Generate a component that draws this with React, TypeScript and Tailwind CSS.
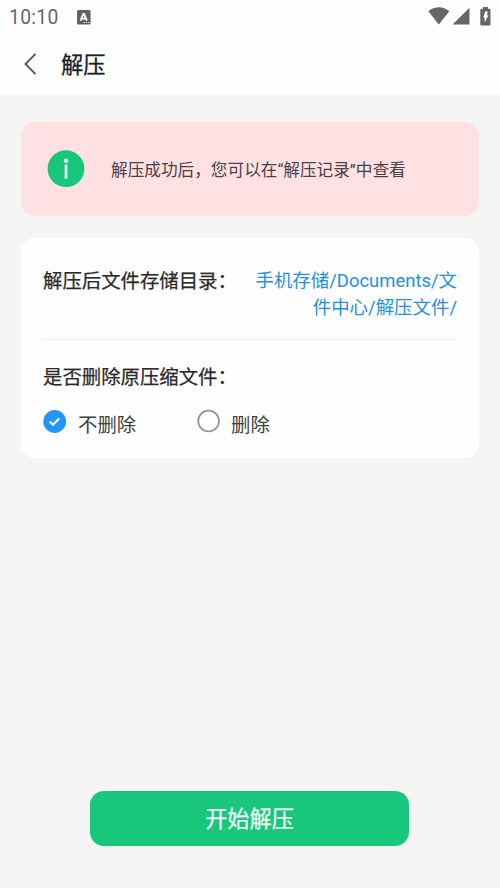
function StatusBar() {
  return (
    <div className="flex h-8 items-center pl-[9px] pr-[9px] text-[#666666]">
      <span className="pt-[3px] text-[19.3px] leading-[29px] tracking-[0.3px]">10:10</span>
      <svg className="ml-[18px] mt-[2px]" width="14" height="15" viewBox="0 0 14 15">
        <rect width="13.6" height="14.4" rx="1.5" fill="#626262" />
        <path d="M3.6 10.6 6.3 4h.8l2.700 6.600M4.600 8.600h4.200" fill="none" stroke="#fff" strokeWidth="1.900" />
        <path d="M6.800 12h1.100v1.100H6.800zM9 12h1.100v1.100H9zM11.200 12h1.100v1.100h-1.100z" fill="#fff" />
      </svg>
      <div className="ml-auto flex items-center">
        <svg width="22" height="18" viewBox="0 0 22 18" fill="currentColor">
          <path d="M.3 4.200Q5 .3 10.800.3T21.300 4.200L10.800 17.500Z" />
        </svg>
        <svg className="ml-[2px]" width="18" height="18" viewBox="0 0 18 18" fill="currentColor">
          <path d="M17.500.7V17.500H.5Z" />
        </svg>
        <svg className="ml-[10px]" width="11" height="19" viewBox="0 0 11 19" fill="currentColor">
          <path d="M3 0h5v1.800h1.300Q10.500 1.800 10.500 3V17.300Q10.500 18.500 9.300 18.500H1.500Q.3 18.500.3 17.300V3Q.3 1.800 1.500 1.800H3Z" />
          <path d="M5.200 4.500h2.600L6.900 8.200h1.500L4.600 15.800V10.500H3.300Z" fill="#fff" />
        </svg>
      </div>
    </div>
  );
}

function Header() {
  return (
    <header className="h-[95px] bg-[#fefefe]">
      <StatusBar />
      <div className="flex h-[63px] items-center pl-6">
        <svg width="13" height="22" viewBox="0 0 13 22" fill="none" stroke="#555555" strokeWidth="1.900">
          <path d="M11.500.8 1.500 11 11.500 21.200" />
        </svg>
        <h1 className="ml-6 pt-[2px] text-[22.200px] leading-8 text-[#182029] [-webkit-text-stroke:0.3px_#182029]">解压</h1>
      </div>
    </header>
  );
}

export default function App() {
  return (
    <div className="flex h-[888px] w-[500px] flex-col overflow-hidden bg-[#f5f5f5] font-['Roboto','Noto_Sans_CJK_SC',sans-serif]">
      <Header />
      <main className="flex flex-1 flex-col px-[21px] pt-[27px]">
        <section className="flex h-[94px] items-center rounded-[14px] bg-[#ffe0e3] pl-[26px]">
          <svg className="shrink-0" width="38" height="38" viewBox="0 0 38 38">
            <circle cx="19" cy="18.700" r="18.400" fill="#17c57b" />
            <circle cx="19" cy="10.700" r="2.300" fill="#e6faf0" />
            <rect x="17.600" y="14.500" width="2.800" height="14.300" rx="0.500" fill="#e6faf0" />
          </svg>
          <p className="ml-[26px] whitespace-nowrap pt-[3px] text-[16.650px] leading-6 text-[#4b4143]">解压成功后，您可以在“解压记录”中查看</p>
        </section>
        <section className="mt-[22px] h-[220px] rounded-[14px] bg-[#fefefe] px-[22px] pt-[30px]">
          <div className="flex h-[72px] justify-between border-b border-[#eeeeee]">
            <h2 className="whitespace-nowrap text-[19.400px] leading-[27px] text-[#2a2a2a] [-webkit-text-stroke:0.25px_#2a2a2a]">解压后文件存储目录：</h2>
            <p className="w-[204px] break-all text-right text-[18.450px] leading-[27px] text-[#2490dd]">
              手机存储/Documents/文<br />件中心/解压文件/
            </p>
          </div>
          <h2 className="mt-[24px] whitespace-nowrap text-[19.400px] leading-[27px] text-[#2a2a2a] [-webkit-text-stroke:0.25px_#2a2a2a]">是否删除原压缩文件：</h2>
          <div className="mt-[16px] flex h-[30px] items-center text-[19.400px] leading-[30px] text-[#3f3f3f]">
            <label className="flex w-[154px] items-center">
              <svg className="-mt-[3px]" width="24" height="24" viewBox="0 0 24 24">
                <circle cx="11.700" cy="12.500" r="11.400" fill="#2196f8" />
                <path d="m6.800 12.500 3.200 3.200 6.200-6.300" fill="none" stroke="#fff" strokeWidth="2.100" />
              </svg>
              <span className="ml-[11px] pt-[7px]">不删除</span>
            </label>
            <label className="flex items-center">
              <svg className="-mt-[3px]" width="24" height="24" viewBox="0 0 24 24">
                <circle cx="11.600" cy="12" r="10.400" fill="#fff" stroke="#999999" strokeWidth="1.900" />
              </svg>
              <span className="ml-[10px] pt-[7px]">删除</span>
            </label>
          </div>
        </section>
        <button className="mt-auto mb-[42px] ml-[69px] h-[55px] w-[319px] rounded-[14px] bg-[#18c67c] pt-[2px] text-[22.200px] text-[#f3fff9] [-webkit-text-stroke:0.25px_#f3fff9]">开始解压</button>
      </main>
    </div>
  );
}
